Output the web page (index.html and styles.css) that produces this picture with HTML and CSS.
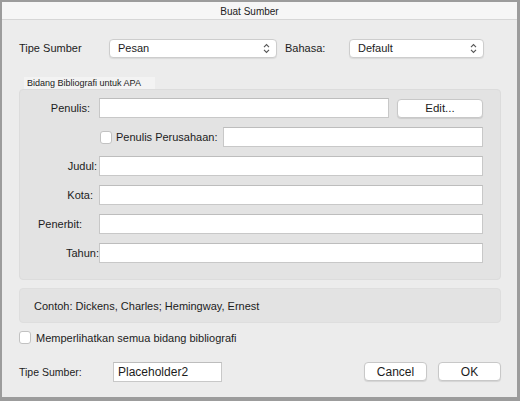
FILE: index.html
```html
<!DOCTYPE html>
<html lang="id">
<head>
<meta charset="utf-8">
<title>Buat Sumber</title>
<link rel="stylesheet" href="styles.css">
</head>
<body>
<div class="window">
  <div class="titlebar"><span class="title">Buat Sumber</span></div>
  <div class="content">
    <div class="row-top">
      <span class="lbl-type">Tipe Sumber</span>
      <div class="select select-type">
        <span>Pesan</span>
        <svg class="chev" viewBox="0 0 7 11" width="7" height="11"><path d="M1 4.2 L3.5 1.6 L6 4.2 M1 6.8 L3.5 9.4 L6 6.8" fill="none" stroke="#555" stroke-width="1.1"/></svg>
      </div>
      <span class="lbl-lang">Bahasa:</span>
      <div class="select select-lang">
        <span>Default</span>
        <svg class="chev" viewBox="0 0 7 11" width="7" height="11"><path d="M1 4.2 L3.5 1.6 L6 4.2 M1 6.8 L3.5 9.4 L6 6.8" fill="none" stroke="#555" stroke-width="1.1"/></svg>
      </div>
    </div>

    <div class="group-label">Bidang Bibliografi untuk APA</div>
    <div class="group">
      <div class="frow">
        <label class="flabel pr-penulis">Penulis:</label>
        <div class="input input-author"></div>
        <div class="btn btn-edit">Edit...</div>
      </div>
      <div class="frow">
        <span class="flabel"></span>
        <span class="check check-corp"></span>
        <span class="corp-text">Penulis Perusahaan:</span>
        <div class="input input-corp"></div>
      </div>
      <div class="frow">
        <label class="flabel pr-judul">Judul:</label>
        <div class="input input-full"></div>
      </div>
      <div class="frow">
        <label class="flabel pr-kota">Kota:</label>
        <div class="input input-full"></div>
      </div>
      <div class="frow">
        <label class="flabel pr-penerbit">Penerbit:</label>
        <div class="input input-full"></div>
      </div>
      <div class="frow">
        <label class="flabel pr-tahun">Tahun:</label>
        <div class="input input-full"></div>
      </div>
    </div>

    <div class="example">Contoh: Dickens, Charles; Hemingway, Ernest</div>

    <div class="show-all">
      <span class="check"></span>
      <span class="show-text">Memperlihatkan semua bidang bibliografi</span>
    </div>

    <div class="row-bottom">
      <span class="lbl-tag">Tipe Sumber:</span>
      <div class="input input-tag">Placeholder2</div>
      <div class="spacer"></div>
      <div class="btn btn-cancel">Cancel</div>
      <div class="btn btn-ok">OK</div>
    </div>
  </div>
</div>
</body>
</html>
```

FILE: styles.css
```css
* { box-sizing: border-box; }
html, body { margin: 0; padding: 0; }
body {
  width: 520px;
  height: 401px;
  overflow: hidden;
  font-family: "Liberation Sans", Arial, sans-serif;
  font-size: 11px;
  color: #1c1c1c;
  background: #ececec;
}
.window {
  width: 520px;
  height: 401px;
  border-style: solid;
  border-color: #9c9c9c;
  border-width: 2px 3px 4px 2px;
  background: #ececec;
  display: flex;
  flex-direction: column;
}
.titlebar {
  height: 18px;
  background: #f6f6f6;
  border-bottom: 1px solid #d6d6d6;
  display: flex;
  align-items: center;
  justify-content: center;
  padding-right: 20px;
  padding-top: 1px;
}
.title { font-size: 10px; color: #222; }
.content {
  flex: 1;
  padding: 0 16px 0 17px;
  display: flex;
  flex-direction: column;
}
.row-top {
  margin-top: 18px;
  height: 20px;
  display: flex;
  align-items: center;
}
.lbl-type { width: 90px; }
.lbl-lang { width: 64px; margin-left: 8px; }
.select {
  height: 19px;
  background: #fff;
  border: 1px solid #cdcdcd;
  border-radius: 4px;
  box-shadow: 0 1px 1px rgba(0,0,0,0.08);
  display: flex;
  align-items: center;
  justify-content: space-between;
  padding: 0 6px 0 8px;
  font-size: 11px;
}
.select-type { width: 168px; }
.select-lang { width: 135px; }
.chev { display: block; }

.group-label {
  margin-top: 19px;
  margin-left: 5px;
  width: 131px;
  height: 12px;
  background: #f3f3f3;
  font-size: 9px;
  line-height: 12px;
  padding-left: 3px;
  color: #222;
}
.group {
  height: 191px;
  width: 482px;
  background: #e3e3e3;
  border: 1px solid #dcdcdc;
  border-radius: 4px;
  padding: 8px 17px 0 0;
  display: flex;
  flex-direction: column;
  gap: 9px;
}
.frow {
  height: 20px;
  display: flex;
  align-items: center;
}
.flabel { width: 79px; flex: none; text-align: right; }
.pr-penulis { padding-right: 9px; }
.pr-judul { padding-right: 2px; }
.pr-kota { padding-right: 6px; }
.pr-penerbit { padding-right: 17px; }
.pr-tahun { padding-right: 0; }
.input {
  height: 20px;
  background: #fff;
  border: 1px solid #c8c8c8;
  border-top-color: #bdbdbd;
}
.input-author { width: 290px; }
.input-full { flex: 1; }
.input-corp { flex: 1; }
.btn {
  height: 19px;
  background: #fff;
  border: 1px solid #c8c8c8;
  border-radius: 4px;
  box-shadow: 0 1px 1px rgba(0,0,0,0.1);
  display: flex;
  align-items: center;
  justify-content: center;
  font-size: 12px;
  color: #1c1c1c;
}
.btn-edit { width: 86px; margin-left: 8px; font-size: 11.5px; }
.check {
  width: 12px;
  height: 13px;
  background: #fff;
  border: 1px solid #c2c2c2;
  border-radius: 3px;
  flex: none;
}
.check-corp { margin-left: 1px; }
.corp-text { margin-left: 4px; width: 107px; }

.example {
  margin-top: 8px;
  width: 482px;
  height: 35px;
  background: #e3e3e3;
  border: 1px solid #dedede;
  border-radius: 4px;
  padding-left: 14px;
  display: flex;
  align-items: center;
}
.show-all {
  margin-top: 8px;
  height: 13px;
  display: flex;
  align-items: center;
}
.show-text { margin-left: 5px; }
.row-bottom {
  margin-top: 17px;
  height: 21px;
  display: flex;
  align-items: center;
}
.lbl-tag { width: 94px; font-size: 10.5px; }
.input-tag {
  width: 109px;
  height: 20px;
  font-size: 12px;
  padding-left: 4px;
  display: flex;
  align-items: center;
}
.spacer { flex: 1; }
.btn-cancel { width: 63px; }
.btn-ok { width: 63px; margin-left: 11px; }
```
